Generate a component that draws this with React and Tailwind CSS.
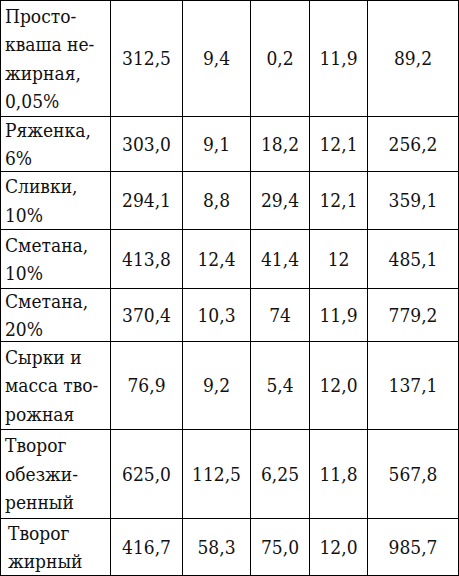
import React from "react";

const rows = [
  { name: ["Просто-", "кваша не-", "жирная,", "0,05%"], vals: ["312,5", "9,4", "0,2", "11,9", "89,2"] },
  { name: ["Ряженка,", "6%"], vals: ["303,0", "9,1", "18,2", "12,1", "256,2"] },
  { name: ["Сливки,", "10%"], vals: ["294,1", "8,8", "29,4", "12,1", "359,1"] },
  { name: ["Сметана,", "10%"], vals: ["413,8", "12,4", "41,4", "12", "485,1"] },
  { name: ["Сметана,", "20%"], vals: ["370,4", "10,3", "74", "11,9", "779,2"] },
  { name: ["Сырки и", "масса тво-", "рожная"], vals: ["76,9", "9,2", "5,4", "12,0", "137,1"] },
  { name: ["Творог", "обезжи-", "ренный"], vals: ["625,0", "112,5", "6,25", "11,8", "567,8"] },
  { name: ["Творог", "жирный"], vals: ["416,7", "58,3", "75,0", "12,0", "985,7"], indent: true },
];

export default function App() {
  return (
    <div className="w-[459px] h-[576px] bg-white text-[#111] text-[19px] leading-[28.5px] font-['DejaVu_Serif_Condensed','DejaVu_Serif',serif] font-stretch-condensed">
      <div className="grid grid-cols-[109px_71px_67px_58px_57px_90px] grid-rows-[115px_54px_57px_58px_52px_87px_88px_56px] gap-px p-px bg-black w-[459px] h-[576px]">
        {rows.map((r, i) => (
          <React.Fragment key={i}>
            <div className={r.indent ? "bg-white flex flex-col justify-center pl-[7px]" : "bg-white flex flex-col justify-center pl-[4px]"}>
              {r.name.map((l, j) => (
                <span key={j} className="whitespace-nowrap">{l}</span>
              ))}
            </div>
            {r.vals.map((v, k) => (
              <div key={k} className="bg-white flex items-center justify-center whitespace-nowrap">
                {v}
              </div>
            ))}
          </React.Fragment>
        ))}
      </div>
    </div>
  );
}
